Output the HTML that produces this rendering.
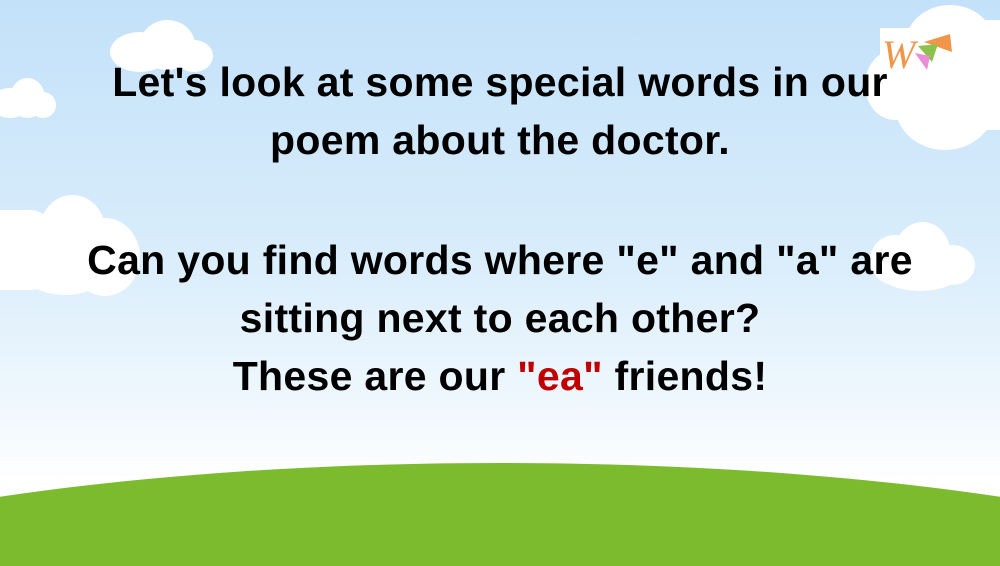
<!DOCTYPE html>
<html><head><style>
html,body{margin:0;padding:0;width:1000px;height:566px;overflow:hidden}
#w{position:relative;width:1000px;height:566px;overflow:hidden;background:linear-gradient(#c3e1f9 0%,#d9edfb 45%,#f3f9fe 75%,#fff 85%);font-family:"Liberation Sans",sans-serif}
.c{position:absolute;background:#fff;border-radius:50%}
.t{position:absolute;left:0;width:1000px;text-align:center;font-weight:bold;font-size:41px;color:#000;line-height:58px;letter-spacing:0.3px}
</style></head><body><div id="w">
<div class="c" style="left:110px;top:32px;width:60px;height:40px"></div>
<div class="c" style="left:140px;top:20px;width:55px;height:50px"></div>
<div class="c" style="left:175px;top:40px;width:38px;height:32px"></div>
<div class="c" style="left:-10px;top:88px;width:40px;height:30px"></div>
<div class="c" style="left:10px;top:78px;width:35px;height:40px"></div>
<div class="c" style="left:30px;top:92px;width:26px;height:26px"></div>
<div class="c" style="left:905px;top:5px;width:90px;height:80px"></div>
<div class="c" style="left:865px;top:50px;width:60px;height:70px"></div>
<div class="c" style="left:895px;top:60px;width:100px;height:90px"></div>
<div class="c" style="left:950px;top:20px;width:50px;height:110px;border-radius:50% 0 0 50%"></div>
<div class="c" style="left:0;top:210px;width:60px;height:80px;border-radius:0 50% 50% 0"></div>
<div class="c" style="left:40px;top:195px;width:65px;height:70px"></div>
<div class="c" style="left:70px;top:218px;width:70px;height:78px"></div>
<div class="c" style="left:20px;top:240px;width:90px;height:55px"></div>
<div class="c" style="left:870px;top:235px;width:50px;height:50px"></div>
<div class="c" style="left:895px;top:222px;width:55px;height:60px"></div>
<div class="c" style="left:930px;top:245px;width:45px;height:40px"></div>
<div class="c" style="left:880px;top:255px;width:80px;height:36px"></div>
<div style="position:absolute;left:880px;top:28px;width:70px;height:45px;background:#fff"></div>
<svg style="position:absolute;left:880px;top:28px" width="75" height="48" viewBox="0 0 75 48">
<text x="2" y="40" font-family="Liberation Serif,serif" font-style="italic" font-size="40" fill="#f0954a">W</text>
<polygon points="44,14 70,6 72,24" fill="#f0954a"/>
<polygon points="38,18 58,16 52,34" fill="#8bc34a"/>
<polygon points="35,25 50,28 47,42" fill="#e98ed6"/>
</svg>
<svg style="position:absolute;left:0;top:0" width="1000" height="566" viewBox="0 0 1000 566">
<ellipse cx="500" cy="663" rx="900" ry="200" fill="#7dbb2e"/>
</svg>
<div class="t" style="top:53px">Let's look at some special words in our<br>poem about the doctor.</div>
<div class="t" style="top:231px">Can you find words where "e" and "a" are<br>sitting next to each other?<br>These are our <span style="color:#c00000">"ea"</span> friends!</div>
</div></body></html>
